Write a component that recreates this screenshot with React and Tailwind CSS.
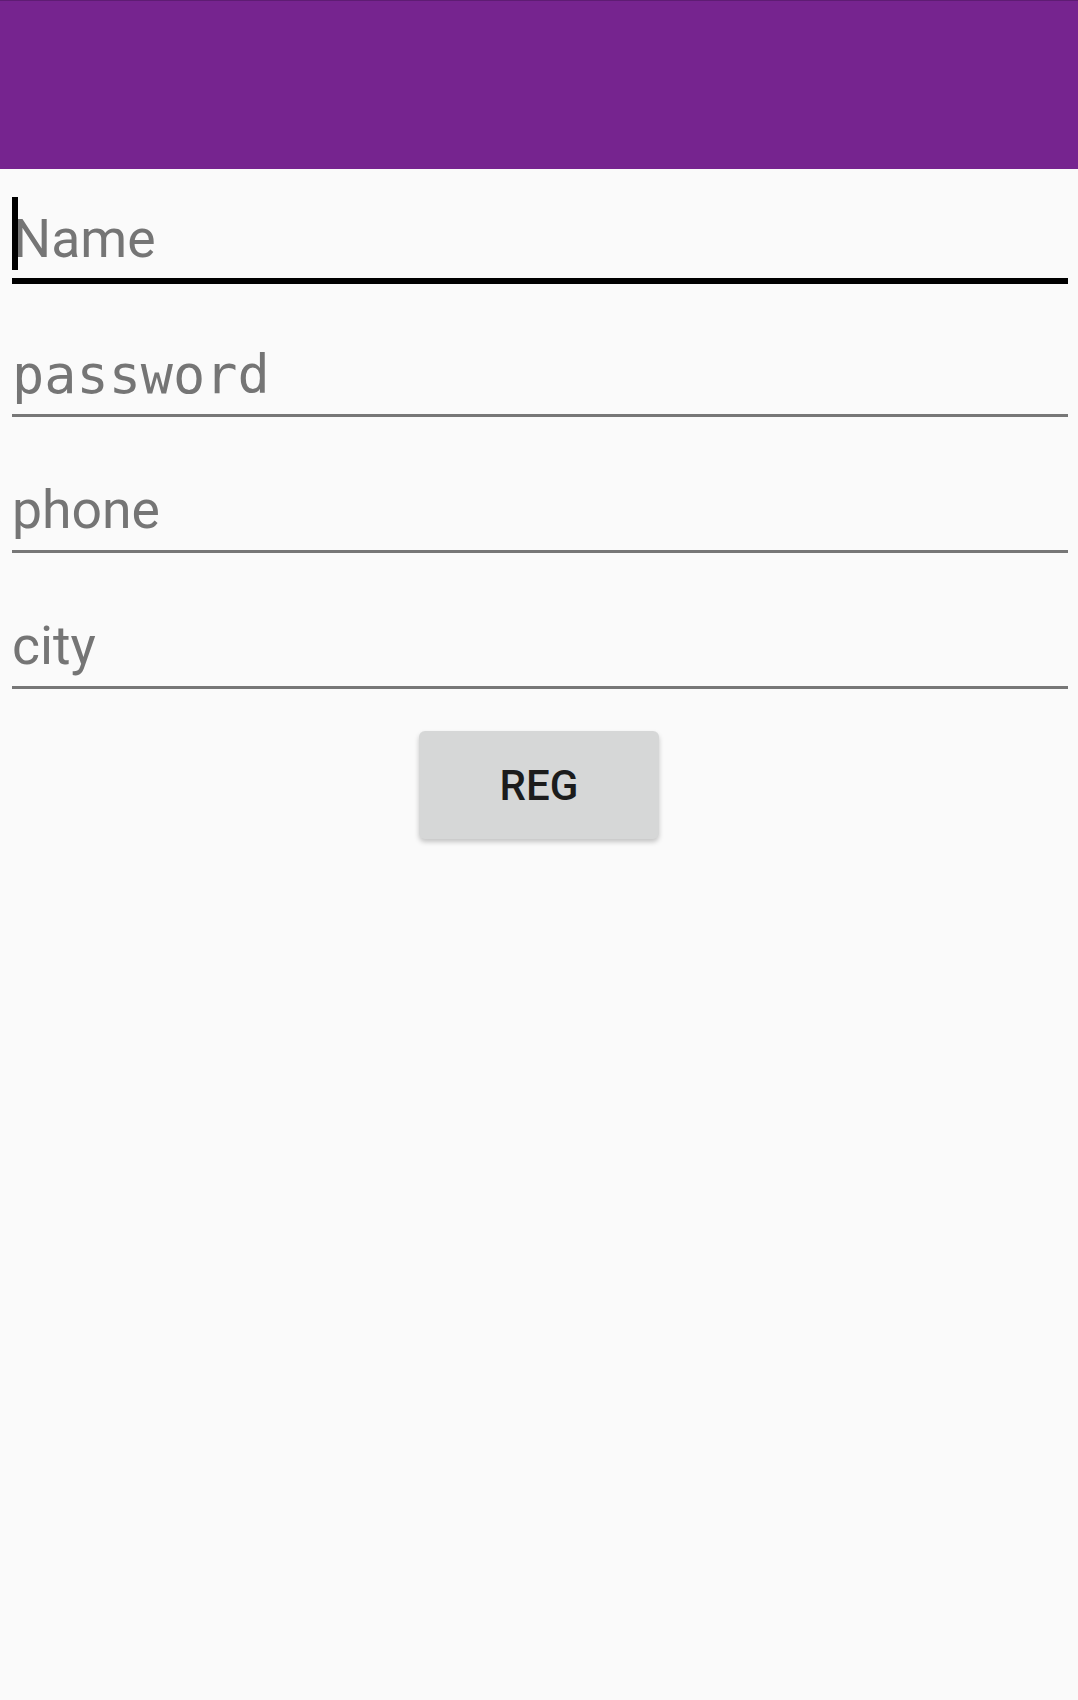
export default function App() {
  return (
    <div className="w-[1078px] h-[1700px] bg-[#fafafa] flex flex-col">
      <div className="h-[169px] bg-[#76248f] border-t border-[#5e1c73] shrink-0" />
      <div className="pl-[12px] pr-[10px] flex flex-col">
        <div className="h-[115px] flex flex-col justify-end">
          <div className="relative pb-[7px] pl-[1px] text-[53.5px] leading-[64px] text-[#757575] font-['Roboto',sans-serif]">
            Name
            <div className="absolute left-0 top-[-10px] w-[6px] h-[73px] bg-black" />
          </div>
          <div className="h-[6px] bg-black" />
        </div>
        <div className="h-[133px] flex flex-col justify-end">
          <div className="pb-[7px] text-[53.5px] leading-[64px] text-[#757575] font-['DejaVu_Sans_Mono',monospace]">
            password
          </div>
          <div className="h-[3px] bg-[#777777]" />
        </div>
        <div className="h-[136px] flex flex-col justify-end">
          <div className="pb-[8px] text-[53.5px] leading-[64px] text-[#757575] font-['Roboto',sans-serif]">
            phone
          </div>
          <div className="h-[3px] bg-[#777777]" />
        </div>
        <div className="h-[136px] flex flex-col justify-end">
          <div className="pb-[8px] text-[53.5px] leading-[64px] text-[#757575] font-['Roboto',sans-serif]">
            city
          </div>
          <div className="h-[3px] bg-[#777777]" />
        </div>
      </div>
      <div className="flex justify-center pt-[42px]">
        <button className="w-[240px] h-[108px] bg-[#d6d7d7] rounded-[6px] shadow-[0_3px_5px_rgba(0,0,0,0.22)] flex items-center justify-center text-[42px] font-medium text-[#1c1c1c] font-['Roboto',sans-serif]">
          REG
        </button>
      </div>
    </div>
  );
}
